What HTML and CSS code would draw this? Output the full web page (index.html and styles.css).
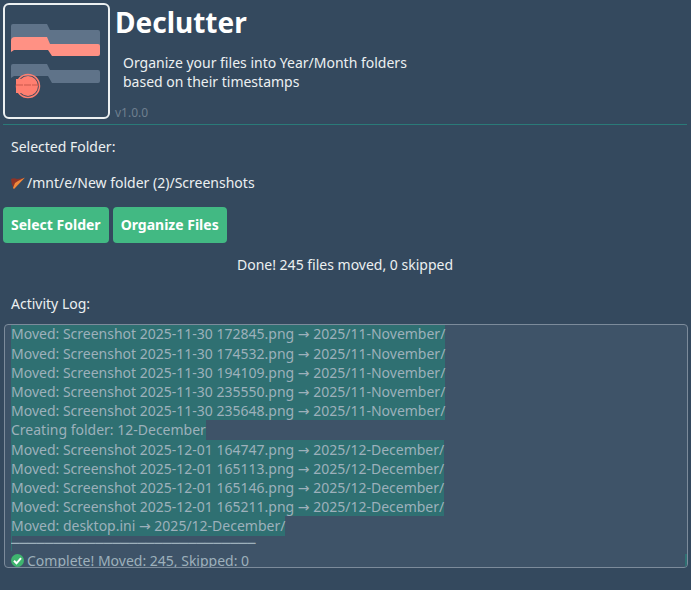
FILE: index.html
```html
<!DOCTYPE html>
<html lang="en">
<head>
<meta charset="utf-8">
<title>Declutter</title>
<link rel="stylesheet" href="styles.css">
</head>
<body>
<div class="app">
  <header class="header">
    <div class="logo">
      <svg width="103" height="112" viewBox="0 0 103 112">
        <path class="grey" d="M6 21a2 2 0 0 1 2-2h34l3 6h48a2 2 0 0 1 2 2v18H6z"/>
        <path class="pink" d="M6 36a4 4 0 0 1 4-4h32l3 7h48a2 2 0 0 1 2 2v8a2 2 0 0 1-2 2H47l-4-6H9l-3 2z"/>
        <path class="grey" d="M6 61a2 2 0 0 1 2-2h34l3 6h48a2 2 0 0 1 2 2v9a2 2 0 0 1-2 2H47l-4-7H9l-3 2z"/>
        <circle class="coral" cx="23" cy="81" r="11.5"/>
        <rect class="coral-fill" x="11" y="74" width="19" height="14"/>
        <circle class="coral-solid" cx="23" cy="81" r="10"/>
        <path class="dash" d="M11 80h23"/>
      </svg>
    </div>
    <div class="head-text">
      <h1 class="title">Declutter</h1>
      <p class="desc">Organize your files into Year/Month folders<br>based on their timestamps</p>
      <span class="version">v1.0.0</span>
    </div>
  </header>
  <hr class="rule">
  <div class="label folder-label">Selected Folder:</div>
  <div class="label path">
    <svg class="folder-icon" width="14" height="14" viewBox="0 0 14 14">
      <path fill="#8f3427" d="M0 3q3-1.500 6 0l7-1L3 13Q0 8 0 3z"/>
      <path fill="#f08a3c" d="M14 1.500 3 13l-1-1 2-5 3-2z"/>
    </svg>
    <span>/mnt/e/New folder (2)/Screenshots</span>
  </div>
  <div class="actions">
    <button class="btn">Select Folder</button>
    <button class="btn">Organize Files</button>
  </div>
  <div class="status">Done! 245 files moved, 0 skipped</div>
  <div class="label log-label">Activity Log:</div>
  <div class="log">
    <div class="sel">Moved: Screenshot 2025-11-30 172845.png → 2025/11-November/</div>
    <div class="sel">Moved: Screenshot 2025-11-30 174532.png → 2025/11-November/</div>
    <div class="sel">Moved: Screenshot 2025-11-30 194109.png → 2025/11-November/</div>
    <div class="sel">Moved: Screenshot 2025-11-30 235550.png → 2025/11-November/</div>
    <div class="sel">Moved: Screenshot 2025-11-30 235648.png → 2025/11-November/</div>
    <div class="sel">Creating folder: 12-December</div>
    <div class="sel">Moved: Screenshot 2025-12-01 164747.png → 2025/12-December/</div>
    <div class="sel">Moved: Screenshot 2025-12-01 165113.png → 2025/12-December/</div>
    <div class="sel">Moved: Screenshot 2025-12-01 165146.png → 2025/12-December/</div>
    <div class="sel">Moved: Screenshot 2025-12-01 165211.png → 2025/12-December/</div>
    <div class="sel">Moved: desktop.ini → 2025/12-December/</div>
    <div class="sep">─────────────────────────────</div>
    <div class="done">
      <svg width="13" height="13" viewBox="0 0 13 13">
        <circle cx="6.500" cy="6.500" r="6.500" fill="#3fb56f"/>
        <path d="M3 6.800 5.500 9.300 10 4.200" fill="none" stroke="#fff" stroke-width="2"/>
      </svg>
      <span>Complete! Moved: 245, Skipped: 0</span>
    </div>
    <div class="thumb"></div>
  </div>
</div>
</body>
</html>
```
FILE: styles.css
```css
* { box-sizing: border-box; }
html, body { height: 100%; }
body {
  margin: 0;
  background: #34495e;
  color: #ecf0f1;
  font-family: "Noto Sans", "DejaVu Sans", sans-serif;
  font-size: 14px;
  overflow: hidden;
}
.app { padding: 3px 4px 0 3px; }
.header { display: flex; height: 117px; }
.logo {
  width: 107px;
  height: 116px;
  border: 2px solid #ecf0f1;
  border-radius: 6px;
  flex: none;
}
.logo svg { display: block; }
.grey { fill: #5f7389; }
.pink { fill: #ff9184; }
.coral { fill: none; stroke: #ff7f70; stroke-width: 1.5; }
.coral-fill { fill: #ff7f70; }
.coral-solid { fill: #ff7f70; }
.dash { stroke: #c9584a; stroke-width: 1; stroke-dasharray: 7 1; }
.head-text { margin-left: 5px; display: flex; flex-direction: column; align-items: flex-start; }
.title { margin: 0; font-size: 28px; font-weight: 700; line-height: 38px; color: #fff; }
.desc { margin: 12px 0 0 8px; line-height: 19px; }
.version { margin-top: 14px; font-size: 12px; line-height: 15px; color: #6f7f8f; }
.rule { margin: 4px 0 0; border: 0; height: 1px; background: #2a7a78; }
.label { padding-left: 8px; line-height: 19px; }
.folder-label { margin-top: 12px; }
.path { margin-top: 17px; display: flex; align-items: center; gap: 2px; }
.folder-icon { flex: none; margin-top: 1px; }
.actions { display: flex; gap: 4px; margin-top: 15px; }
.btn {
  height: 36px;
  padding: 0 8px 2px;
  border: 0;
  border-radius: 4px;
  background: #42b983;
  color: #fff;
  font: 700 14px "Noto Sans", sans-serif;
}
.status { margin-top: 12px; text-align: center; line-height: 19px; }
.log-label { margin-top: 20px; }
.log {
  position: relative;
  margin: 11px 0 0 1px;
  width: 684px;
  height: 244px;
  padding: 0 6px;
  border: 1px solid #7c8b9b;
  border-radius: 4px;
  background: #3e5368;
  color: #9db0bb;
  overflow: hidden;
  line-height: 19.2px;
  white-space: nowrap;
}
.sel { width: fit-content; background: #2f7072; }
.sel:first-child { margin-top: -.6px; }
.sep { height: 15px; line-height: 13px; overflow: hidden; box-shadow: inset 1px 0 #2f7072; }
.done { display: flex; align-items: center; gap: 3px; height: 19px; }
.done svg { flex: none; }
.thumb { position: absolute; right: 0; bottom: 0; width: 2px; height: 13px; background: #2f7072; }
```
